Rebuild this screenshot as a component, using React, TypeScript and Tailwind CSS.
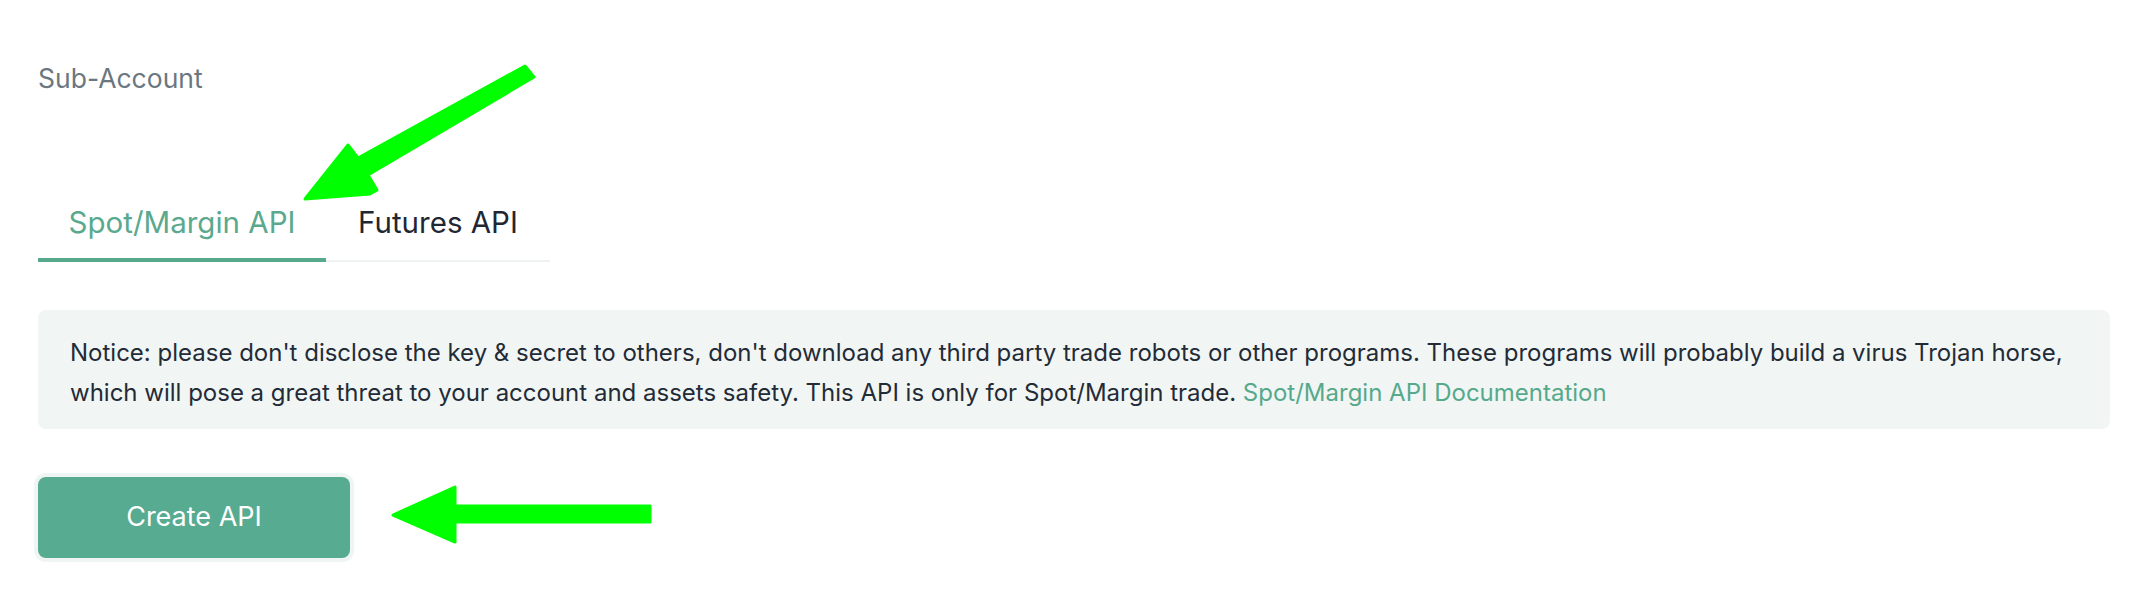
import React from "react";

export default function App() {
  return (
    <div
      className="relative h-[600px] w-full overflow-hidden bg-white pl-[38px] pr-[46px] pt-[58px]"
      style={{ fontFamily: "Inter, 'Noto Sans', sans-serif" }}
    >
      <div className="text-[26.5px] leading-[40px] text-[#6b777f]">Sub-Account</div>

      <div className="mt-[104px] flex w-[512px] border-b-2 border-[#eef3f2]">
        <div className="-mb-[2px] w-[288px] whitespace-nowrap border-b-4 border-[#56a98b] pb-[16px] text-center text-[29.5px] leading-[40px] text-[#5aa98e]">
          Spot/Margin API
        </div>
        <div className="-mb-[2px] w-[224px] whitespace-nowrap pb-[20px] text-center text-[29.5px] leading-[40px] text-[#1f2733]">
          Futures API
        </div>
      </div>

      <div className="mt-[48px] rounded-lg bg-[#f1f6f5] pl-[32px] pr-[32px] pt-[23px] pb-[16px] text-[24px] leading-[40px] text-[#232b37]">
        Notice: please don't disclose the key &amp; secret to others, don't download any third party trade robots or
        other programs. These programs will probably build a virus Trojan horse, which will pose a great threat to your
        account and assets safety. This API is only for Spot/Margin trade.{" "}
        <span className="text-[#56a98b]">Spot/Margin API Documentation</span>
      </div>

      <button className="mt-[48px] flex h-[81px] w-[312px] items-center justify-center rounded-lg bg-[#56ab91] text-[27px] text-white ring-4 ring-[#eef5f2]">
        Create API
      </button>

      <svg
        className="pointer-events-none absolute left-0 top-0"
        width="2156"
        height="600"
        viewBox="0 0 2156 600"
      >
        <path
          d="M525 66 L534 77 L368 175 L377 190 L370 194 L305 199 L348 145 L358 158 Z"
          fill="#00ff00"
          stroke="#00ff00"
          strokeWidth="3"
          strokeLinejoin="round"
        />
        <path
          d="M393 515 L455 487 L455 506 L650 506 L650 522 L455 522 L455 542 Z"
          fill="#00ff00"
          stroke="#00ff00"
          strokeWidth="3"
          strokeLinejoin="round"
        />
      </svg>
    </div>
  );
}
